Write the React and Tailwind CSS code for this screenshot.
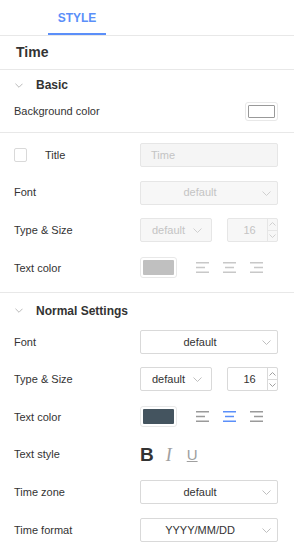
import React from "react";

const Chevron = ({ className = "" }) => (
  <svg width="9" height="5" viewBox="0 0 9 5" className={className}>
    <polyline points="0.5,0.5 4.5,4.5 8.5,0.5" fill="none" stroke="currentColor" strokeWidth="1" />
  </svg>
);

const Row = ({ label, children }) => (
  <div className="h-[24px] flex items-center">
    <div className="w-[140px] pl-[14px] text-[11px] text-[#333]">{label}</div>
    <div className="flex items-center">{children}</div>
  </div>
);

const Select = ({ value, disabled, wide = true }) => (
  <div
    className={`h-[24px] flex items-center rounded-[2px] border relative ${
      wide ? "w-[138px] justify-center pr-[18px]" : "w-[72px] pl-[11px]"
    } ${disabled ? "bg-[#f7f7f7] border-[#e6e6e6] text-[#c4c4c4]" : "bg-white border-[#d9d9d9] text-[#333]"}`}
  >
    <span className="text-[11px]">{value}</span>
    <Chevron className={`absolute top-[9px] ${wide ? "right-[6px]" : "right-[9px]"} ${disabled ? "text-[#d0d0d0]" : "text-[#bfbfbf]"}`} />
  </div>
);

const NumberBox = ({ disabled }) => (
  <div
    className={`ml-[15px] w-[51px] h-[24px] flex rounded-[2px] border ${
      disabled ? "bg-[#f7f7f7] border-[#e6e6e6] text-[#c4c4c4]" : "bg-white border-[#d9d9d9] text-[#333]"
    }`}
  >
    <div className="flex-1 flex items-center justify-center text-[11px] pl-[4px]">16</div>
    <div className={`w-[10px] flex flex-col border-l ${disabled ? "border-[#e6e6e6]" : "border-[#d9d9d9]"}`}>
      <div className={`flex-1 flex items-center justify-center border-b ${disabled ? "border-[#e6e6e6] text-[#d0d0d0]" : "border-[#d9d9d9] text-[#a0a0a0]"}`}>
        <svg width="7" height="4" viewBox="0 0 7 4"><polyline points="0.5,3.5 3.5,0.5 6.5,3.5" fill="none" stroke="currentColor" strokeWidth="1" /></svg>
      </div>
      <div className={`flex-1 flex items-center justify-center ${disabled ? "text-[#d0d0d0]" : "text-[#a0a0a0]"}`}>
        <svg width="7" height="4" viewBox="0 0 7 4"><polyline points="0.5,0.5 3.5,3.5 6.5,0.5" fill="none" stroke="currentColor" strokeWidth="1" /></svg>
      </div>
    </div>
  </div>
);

const AlignIcon = ({ kind, color }) => {
  const mid = kind === "left" ? [0, 9] : kind === "center" ? [2, 9] : [4, 9];
  return (
    <svg width="13" height="11" viewBox="0 0 13 11" className="shrink-0">
      <rect x="0" y="0" width="13" height="1.5" fill={color} />
      <rect x={mid[0]} y="4.75" width={mid[1]} height="1.5" fill={color} />
      <rect x="0" y="9.5" width="13" height="1.5" fill={color} />
    </svg>
  );
};

const ColorRow = ({ fill, disabled, active }) => {
  const gray = disabled ? "#c8c8c8" : "#9a9a9a";
  return (
    <>
      <div className="w-[37px] h-[21px] rounded-[3px] border border-[#e8e8e8] bg-white p-[2px]">
        <div className="w-full h-full rounded-[1px]" style={{ background: fill }} />
      </div>
      <div className="ml-[19px] flex items-center gap-[14px]">
        <AlignIcon kind="left" color={gray} />
        <AlignIcon kind="center" color={active ? "#5b8ff9" : gray} />
        <AlignIcon kind="right" color={gray} />
      </div>
    </>
  );
};

const SectionHeader = ({ title, h }) => (
  <div className={`${h} flex items-center pl-[15px]`}>
    <Chevron className="text-[#b0b0b0] w-[8px]" />
    <span className="ml-[13px] text-[12px] font-bold text-[#333]">{title}</span>
  </div>
);

export default function App() {
  return (
    <div className="w-[294px] h-[553px] overflow-hidden bg-white font-['Liberation_Sans',Arial,sans-serif] text-[#333]">
      <div className="h-[36px] border-b border-[#e8e8e8] flex pl-[48px]">
        <div className="w-[58px] h-[35px] pt-[3px] flex items-center justify-center border-b-2 border-[#5b8ff9] text-[#5b8ff9] text-[12px] font-bold">
          STYLE
        </div>
      </div>

      <div className="h-[34px] border-b border-[#e8e8e8] flex items-center pl-[16px] text-[14px] font-bold text-[#333]">
        Time
      </div>

      <div className="border-b border-[#e8e8e8] pb-[10px]">
        <SectionHeader title="Basic" h="h-[30px]" />
        <div className="h-[22px] flex items-center justify-between pl-[14px] pr-[16px]">
          <span className="text-[11px] text-[#333]">Background color</span>
          <div className="w-[33px] h-[19px] rounded-[3px] border border-[#e8e8e8] p-[2px]">
            <div className="w-full h-full border border-[#999] rounded-[1px] bg-white" />
          </div>
        </div>
      </div>

      <div className="border-b border-[#e8e8e8] pt-[10px] pb-[12px] flex flex-col gap-[13.6px]">
        <div className="h-[24px] flex items-center">
          <div className="w-[140px] pl-[14px] flex items-center">
            <div className="w-[13px] h-[14px] rounded-[2px] border border-[#d9d9d9] bg-white" />
            <span className="ml-[18px] text-[11px] text-[#333]">Title</span>
          </div>
          <div className="w-[138px] h-[24px] rounded-[2px] border border-[#e6e6e6] bg-[#f5f5f5] flex items-center pl-[10px] text-[11px] text-[#c4c4c4]">
            Time
          </div>
        </div>
        <Row label="Font">
          <Select value="default" disabled />
        </Row>
        <Row label="Type & Size">
          <Select value="default" disabled wide={false} />
          <NumberBox disabled />
        </Row>
        <Row label="Text color">
          <ColorRow fill="#c0c0c0" disabled />
        </Row>
      </div>

      <SectionHeader title="Normal Settings" h="h-[36px]" />
      <div className="pt-px flex flex-col gap-[13.6px]">
        <Row label="Font">
          <Select value="default" />
        </Row>
        <Row label="Type & Size">
          <Select value="default" wide={false} />
          <NumberBox />
        </Row>
        <Row label="Text color">
          <ColorRow fill="#44545f" active />
        </Row>
        <Row label="Text style">
          <div className="flex items-center">
            <span className="text-[19px] font-bold text-[#333] leading-none">B</span>
            <span className="ml-[12px] text-[18px] italic text-[#a0a0a0] leading-none font-['Liberation_Serif',serif]">I</span>
            <span className="ml-[15px] text-[15px] text-[#a0a0a0] underline leading-none">U</span>
          </div>
        </Row>
        <Row label="Time zone">
          <Select value="default" />
        </Row>
        <Row label="Time format">
          <Select value="YYYY/MM/DD" />
        </Row>
      </div>
    </div>
  );
}
